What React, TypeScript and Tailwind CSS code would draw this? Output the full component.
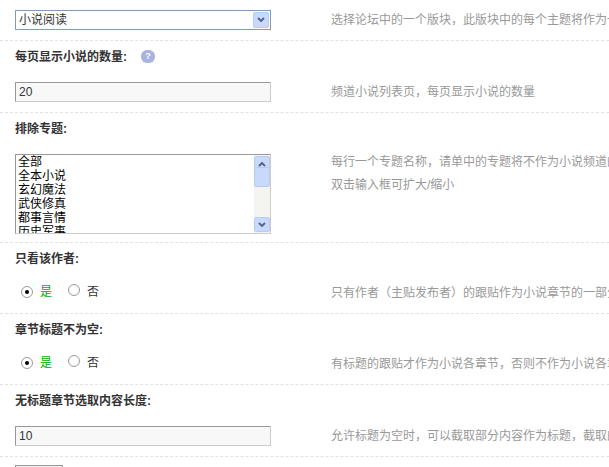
const FONT = { fontFamily: '"Liberation Sans", "Noto Sans CJK SC", sans-serif' };

function Label({ text, help }: { text: string; help?: boolean }) {
  return (
    <div className="h-[31px] flex items-center pl-[15px] text-[12px] font-bold text-[#333]">
      {text}
      {help && (
        <span className="ml-[14px] inline-flex h-[13px] w-[14px] items-center justify-center rounded-[6px] bg-[#a9b4dc] text-[9px] text-white">?</span>
      )}
    </div>
  );
}

function Row({ children, desc, pt = "pt-[10px]" }: { children: React.ReactNode; desc: React.ReactNode; pt?: string }) {
  return (
    <div className="flex border-b border-dashed border-[#e2e2e2] pb-[8px]">
      <div className={`w-[331px] shrink-0 pl-[15px] ${pt}`}>{children}</div>
      <div className="whitespace-nowrap text-[12px] leading-[23px] text-[#999]">{desc}</div>
    </div>
  );
}

function Radio({ checked }: { checked?: boolean }) {
  return (
    <span className="inline-flex h-[12px] w-[12px] items-center justify-center rounded-full border border-[#999] bg-white">
      {checked && <span className="h-[4px] w-[4px] rounded-full bg-black" />}
    </span>
  );
}

function YesNo() {
  return (
    <div className="flex h-[22px] items-center pl-[6px] text-[12px]">
      <Radio checked />
      <span className="ml-[7px] text-[#0a0]">是</span>
      <span className="ml-[16px]"><Radio /></span>
      <span className="ml-[7px] text-[#333]">否</span>
    </div>
  );
}

function TextBox({ value }: { value: string }) {
  return (
    <div className="flex h-[20px] w-[256px] items-center border border-[#999] border-b-[#ccc] border-r-[#ccc] bg-[#f8f8f8] px-[3px] text-[12px] text-[#333]">
      {value}
    </div>
  );
}

export default function App() {
  const topics = ["全部", "全本小说", "玄幻魔法", "武侠修真", "都事言情", "历史军事"];
  return (
    <div className="h-[467px] w-[609px] overflow-hidden bg-white" style={FONT}>
      <Row desc={<div className="pt-[9px]">选择论坛中的一个版块，此版块中的每个主题将作为一个小说</div>}>
        <div className="flex h-[20px] w-[256px] items-center justify-between border border-[#7f9db9] bg-white pl-[3px] pr-[1px] text-[12px] text-[#333]">
          小说阅读
          <span className="flex h-[16px] w-[16px] items-center justify-center rounded-[2px] border border-[#b8cbf5] bg-[#c9d9fb]">
            <svg width="8" height="6" viewBox="0 0 8 6"><path d="M1 1l3 3 3-3" stroke="#4d6185" strokeWidth="1.8" fill="none" /></svg>
          </span>
        </div>
      </Row>
      <Label text="每页显示小说的数量:" help />
      <Row desc={<div className="pt-[9px]">频道小说列表页，每页显示小说的数量</div>}>
        <TextBox value="20" />
      </Row>
      <Label text="排除专题:" />
      <Row desc={<div className="pt-[7px]"><div>每行一个专题名称，请单中的专题将不作为小说频道的专题</div><div>双击输入框可扩大/缩小</div></div>}>
        <div className="flex h-[80px] w-[256px] border border-[#999] border-b-[#ccc] border-r-[#ccc] bg-white">
          <div className="flex-1 overflow-hidden pl-[2px] text-[12px] leading-[14px] text-[#000]">
            {topics.map((t) => <div key={t}>{t}</div>)}
          </div>
          <div className="flex w-[16px] flex-col justify-between bg-[#f4f4f0] py-[1px]">
            <span className="flex h-[15px] items-center justify-center rounded-[2px] border border-[#b8cbf5] bg-[#c9d9fb]">
              <svg width="8" height="6" viewBox="0 0 8 6"><path d="M1 5l3-3 3 3" stroke="#4d6185" strokeWidth="1.8" fill="none" /></svg>
            </span>
            <span className="-mt-[34px] h-[20px] rounded-[2px] border border-[#b8cbf5] bg-[#c9d9fb]" />
            <span className="flex h-[15px] items-center justify-center rounded-[2px] border border-[#b8cbf5] bg-[#c9d9fb]">
              <svg width="8" height="6" viewBox="0 0 8 6"><path d="M1 1l3 3 3-3" stroke="#4d6185" strokeWidth="1.8" fill="none" /></svg>
            </span>
          </div>
        </div>
      </Row>
      <Label text="只看该作者:" />
      <Row pt="pt-[7px]" desc={<div className="pt-[8px]">只有作者（主贴发布者）的跟贴作为小说章节的一部分</div>}>
        <YesNo />
      </Row>
      <Label text="章节标题不为空:" />
      <Row pt="pt-[7px]" desc={<div className="pt-[8px]">有标题的跟贴才作为小说各章节，否则不作为小说各章节</div>}>
        <YesNo />
      </Row>
      <Label text="无标题章节选取内容长度:" />
      <Row desc={<div className="pt-[9px]">允许标题为空时，可以截取部分内容作为标题，截取的长度</div>}>
        <TextBox value="10" />
      </Row>
      <div className="pl-[15px] pt-[8px]">
        <div className="h-[20px] w-[48px] border border-[#999] bg-[#eee]" />
      </div>
    </div>
  );
}
